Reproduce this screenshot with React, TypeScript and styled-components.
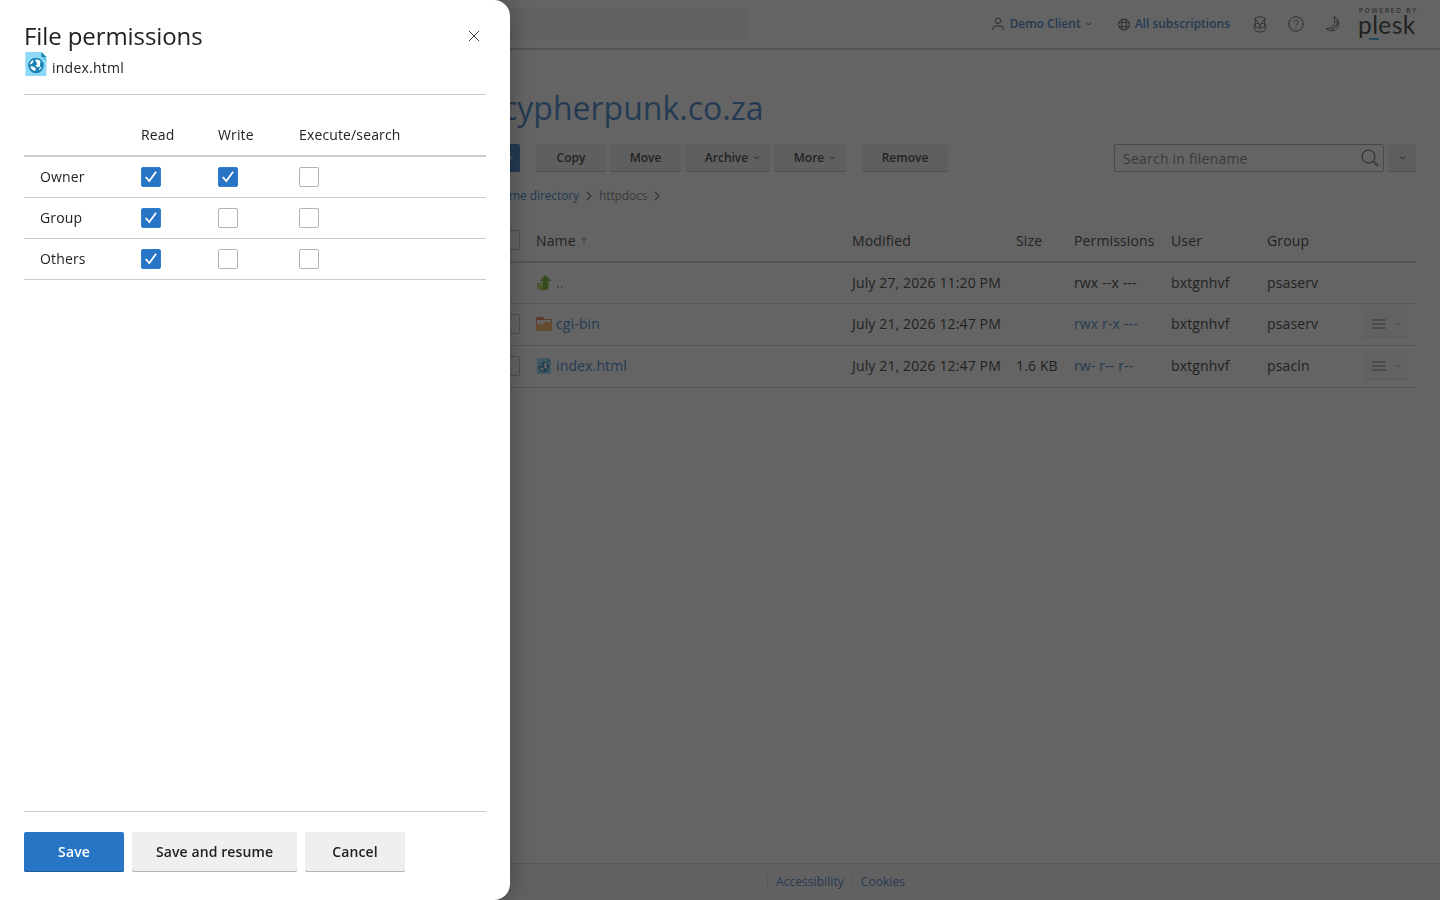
import React from "react";
import styled, { createGlobalStyle, css } from "styled-components";

const GlobalStyle = createGlobalStyle`
  * { box-sizing: border-box; }
  html, body, #root { height: 100%; }
  body {
    margin: 0;
    overflow: hidden;
    background: #fff;
    color: #222;
    font: 14px/20px "Open Sans", "Noto Sans", sans-serif;
    letter-spacing: 0.14px;
  }
  button { font-family: inherit; color: inherit; margin: 0; padding: 0; border: 0; }
  svg { display: block; flex: none; }
`;

/* Page behind the drawer */

const Page = styled.div`
  height: 900px;
  display: flex;
  flex-direction: column;
`;

const Header = styled.header`
  height: 48px;
  flex: none;
  display: flex;
  align-items: center;
  padding: 0 24px 0 248px;
  box-shadow: 0 1px 2px rgba(0, 0, 0, 0.4);
`;

const GlobalSearch = styled.div`
  width: 500px;
  height: 32px;
  border-radius: 2px;
  background: #f5f5f5;
`;

const HeaderNav = styled.nav`
  margin-left: auto;
  display: flex;
  align-items: center;
  height: 48px;
`;

const HeaderLink = styled.a<{ $gap: number }>`
  display: flex;
  align-items: center;
  gap: 5px;
  margin-right: ${(p) => p.$gap}px;
  color: #2875c5;
  font-size: 12px;
  font-weight: 600;
  letter-spacing: 0;
  white-space: nowrap;
`;

const HeaderIcon = styled.span<{ $gap: number }>`
  margin-right: ${(p) => p.$gap}px;
`;

const Brand = styled.div`
  width: 58px;
  height: 48px;
  padding: 8px 0 0 1px;
  color: #222;
`;

const BrandCaption = styled.div`
  font: 6.3px/6px Inter, sans-serif;
  letter-spacing: 1.78px;
  white-space: nowrap;
`;

const BrandName = styled.div`
  margin: -1px 0 0 -1px;
  font: 400 24.5px/24px Lato, sans-serif;
  letter-spacing: 0.4px;
`;

const BrandBar = styled.div`
  width: 10px;
  height: 2px;
  margin: 1px 0 0 10px;
  background: #28aade;
`;

const Main = styled.main`
  flex: 1;
  padding: 40px 24px 0 480px;
`;

const Title = styled.h1`
  margin: 0 0 16px 22px;
  color: #2875c5;
  font-size: 32px;
  line-height: 40px;
  font-weight: 400;
  letter-spacing: 0;
`;

const Toolbar = styled.div`
  display: flex;
  height: 28px;
`;

const ToolButton = styled.button<{ $width: number; $gap?: number; $primary?: boolean; $menu?: boolean }>`
  width: ${(p) => p.$width}px;
  height: 28px;
  margin-right: ${(p) => p.$gap ?? 4}px;
  padding: 0 0 1px ${(p) => (p.$menu ? 9 : 0)}px;
  display: flex;
  align-items: center;
  justify-content: center;
  gap: 6px;
  border-radius: 2px;
  background: ${(p) => (p.$primary ? "#2875c5" : "#efefef")};
  box-shadow: inset 0 -1px 0 ${(p) => (p.$primary ? "#1f5c9c" : "#b5b5b5")};
  color: ${(p) => (p.$primary ? "#fff" : "#222")};
  font-size: 12px;
  font-weight: 600;
`;

const AddButton = styled(ToolButton)`
  justify-content: flex-end;
  padding-right: 7px;
`;

const SearchField = styled.div`
  width: 270px;
  height: 28px;
  margin: 0 4px 0 auto;
  padding: 0 4px 0 8px;
  display: flex;
  align-items: center;
  justify-content: space-between;
  border: 1px solid #a3a3a3;
  border-radius: 2px;
  color: #737373;
  letter-spacing: 0.23px;
  span { padding-top: 1px; }
`;

const Breadcrumbs = styled.div`
  height: 20px;
  margin: 14px 0;
  padding-left: 10px;
  display: flex;
  align-items: center;
  font-size: 12px;
  letter-spacing: -0.1px;
  color: #737373;
`;

const Crumb = styled.span<{ $link?: boolean }>`
  color: ${(p) => (p.$link ? "#2875c5" : "#737373")};
  margin-right: 7px;
  white-space: nowrap;
  &:first-child { width: 89px; text-align: right; }
  & + svg { margin-right: 7px; }
`;

const FileRow = styled.div<{ $head?: boolean; $height?: number }>`
  display: grid;
  grid-template-columns: 56px 316px 164px 58px 97px 96px 96px 53px;
  align-items: center;
  height: ${(p) => p.$height ?? 42}px;
  padding-bottom: ${(p) => (p.$height === 41 ? 0 : 1)}px;
  border-bottom: ${(p) => (p.$head ? 2 : 1)}px solid #ccc;
  white-space: nowrap;
  line-height: ${(p) => (p.$head ? 22 : 20)}px;
  & > span + span,
  & > div + span { padding-top: ${(p) => (p.$head ? 1 : 0)}px; }
`;

const NameCell = styled.div<{ $drop?: number }>`
  display: flex;
  align-items: center;
  gap: 4px;
  padding-top: ${(p) => p.$drop ?? 0}px;
`;

const Link = styled.a`
  color: #2875c5;
`;

const RowMenu = styled.button`
  width: 45px;
  height: 28px;
  display: flex;
  align-items: center;
  justify-content: center;
  gap: 9px;
  border-radius: 2px;
  background: #efefef;
  box-shadow: inset 0 -1px 0 #b5b5b5;
  opacity: 0.45;
`;

const Footer = styled.footer`
  height: 37px;
  padding-left: 767px;
  display: flex;
  align-items: center;
  border-top: 1px solid #ccc;
  background: #f5f5f5;
  font-size: 12px;
  letter-spacing: 0.06px;
`;

const FooterLink = styled.a`
  height: 16px;
  line-height: 16px;
  padding: 0 8px;
  border-left: 1px solid #d9d9d9;
  color: #2875c5;
`;

const Overlay = styled.div`
  position: fixed;
  inset: 0;
  background: rgba(34, 34, 34, 0.7);
`;

/* Drawer */

const Drawer = styled.aside`
  position: fixed;
  top: 0;
  left: 0;
  width: 510px;
  height: 900px;
  padding: 0 24px;
  display: flex;
  flex-direction: column;
  background: #fff;
  border-radius: 0 16px 16px 0;
  box-shadow: 0 0 24px rgba(0, 0, 0, 0.3);
`;

const DrawerHeader = styled.div`
  height: 95px;
  padding-top: 20px;
  display: flex;
  justify-content: space-between;
  border-bottom: 1px solid #ccc;
`;

const DrawerTitle = styled.h2`
  margin: 0;
  font-size: 24px;
  line-height: 32px;
  font-weight: 400;
  letter-spacing: -0.09px;
`;

const DrawerFile = styled.div`
  display: flex;
  gap: 4px;
  letter-spacing: 0.23px;
  span { padding-top: 6px; }
`;

const CloseButton = styled.button`
  width: 24px;
  height: 32px;
  display: grid;
  place-items: center;
  background: none;
`;

const Permissions = styled.div`
  flex: 1;
  padding-top: 20px;
`;

const PermissionRow = styled.div<{ $head?: boolean }>`
  display: grid;
  grid-template-columns: 101px 77px 81px 1fr;
  align-items: center;
  height: ${(p) => (p.$head ? 42 : 41)}px;
  padding-left: 16px;
  border-bottom: ${(p) => (p.$head ? 2 : 1)}px solid #ccc;
`;

const Box = styled.span<{ $checked?: boolean }>`
  width: 20px;
  height: 20px;
  display: grid;
  place-items: center;
  border: 1px solid #b3b3b3;
  border-radius: 2px;
  background: #fff;
  ${(p) =>
    p.$checked &&
    css`
      border-color: #2f7fd0;
      background: #2875c5;
    `}
`;

const HeadBox = styled(Box)`
  margin-left: 20px;
`;

const DrawerFooter = styled.div`
  height: 89px;
  padding-top: 20px;
  display: flex;
  gap: 8px;
  border-top: 1px solid #ccc;
`;

const ActionButton = styled.button<{ $width: number; $primary?: boolean }>`
  width: ${(p) => p.$width}px;
  height: 40px;
  padding-bottom: 2px;
  border-radius: 2px;
  background: ${(p) => (p.$primary ? "#2875c5" : "#efefef")};
  box-shadow: inset 0 -1px 0 ${(p) => (p.$primary ? "#1f5c9c" : "#b5b5b5")};
  color: ${(p) => (p.$primary ? "#fff" : "#222")};
  font-size: 14px;
  font-weight: 600;
  letter-spacing: 0.1px;
`;

/* Icons */

const Chevron = () => (
  <svg width="5" height="4" viewBox="0 0 5 4" fill="none" stroke="#222" strokeWidth="1" overflow="visible">
    <path d="M.1.6 2.500 3 4.900.6" />
  </svg>
);

const CrumbArrow = () => (
  <svg width="6" height="10" viewBox="0 0 6 10" fill="none" stroke="#555" strokeWidth="1.1">
    <path d="M1 1 5 5 1 9" />
  </svg>
);

const HtmlIcon = ({ size }: { size: number }) => (
  <svg width={size} height={size} viewBox="-0.4 0 24 24">
    <path fill="#8ed8f8" d="M2 0h15l5 5v18a1 1 0 0 1-1 1H2a1 1 0 0 1-1-1V1a1 1 0 0 1 1-1Z" />
    <path fill="#6dc3e6" d="M17 5h5v5Z" />
    <path fill="#1c84b5" d="M17 0v5h5Z" />
    <circle cx="11.600" cy="13.500" r="7.800" fill="#1c84b5" />
    <path fill="#fff" d="M5.600 12.200C6 10 7 8.700 8.600 7.900L9 9.600 7.400 12ZM10.500 8c2-1 4.500-.2 5.700 1.700l-.7 2.400.3 2.400-2.300.8-2.700-1.300 1.900-1.600-.5-2.200ZM5.900 14.200l3 .3 2.500 2-.6 2.500C8.200 18.800 6.400 17 5.900 14.200ZM17.200 14.600c-.2 1.700-1.200 3-2.600 3.700l.2-1.900Z" />
  </svg>
);

const FolderIcon = () => (
  <svg width="16" height="16" viewBox="0 0 16 16">
    <path fill="#e8743b" d="M0 2a1 1 0 0 1 1-1h6l1 2h7a1 1 0 0 1 1 1v6H0Z" />
    <path fill="#fff" d="M1 4h14v4H1Z" />
    <path fill="#fba950" d="M0 8h7l2-2h7v8a1 1 0 0 1-1 1H1a1 1 0 0 1-1-1Z" />
  </svg>
);

const UpIcon = () => (
  <svg width="16" height="16" viewBox="0 0 16 16">
    <path fill="#a4d64f" d="M1 8h5.500v7H4.500A3.500 3.500 0 0 1 1 11.500Z" />
    <path fill="#67a80c" d="M9.500 0 15.300 6H12.500v5.500A3.500 3.500 0 0 1 9 15H4c2 0 2.700-1 2.700-3V6H3.700Z" />
  </svg>
);

const UserIcon = () => (
  <svg width="12" height="14" viewBox="0 0 12 14" fill="none" stroke="#333">
    <rect x="3.500" y="1" width="5" height="5.500" rx="2.400" />
    <path d="M1 13v-1.500A2.500 2.500 0 0 1 3.500 9h5a2.500 2.500 0 0 1 2.500 2.500V13" />
  </svg>
);

const GlobeIcon = () => (
  <svg width="12" height="13" viewBox="0.5 0 12 13" fill="none" stroke="#333">
    <circle cx="6.500" cy="6.500" r="5.500" />
    <path strokeWidth="0.9" d="M4.800 1.200Q3.300 6.500 4.800 11.800M8.200 1.200Q9.700 6.500 8.200 11.800M1.500 4.300h10M1.500 8.700h10" />
  </svg>
);

const MascotIcon = () => (
  <svg width="14" height="17" viewBox="0 0 14 17" fill="none" stroke="#444" strokeWidth="0.9">
    <path d="M.5 3.200Q7-1.800 13.500 3.200M2.400 2.400v4.200C-.6 11.500 1.500 16 7 16s7.600-4.500 4.600-9.400V2.400M2.800 3.200 5.200 6.600M11.200 3.200 8.800 6.600M6 12.800h2" />
    <circle cx="4.500" cy="9.500" r="2.300" />
    <circle cx="9.500" cy="9.500" r="2.300" />
  </svg>
);

const HelpIcon = () => (
  <svg width="16" height="16" viewBox="0 0 16 16" fill="none" stroke="#444">
    <circle cx="8" cy="8" r="7.200" />
    <path d="M6 6.300C6 3.600 10 3.600 10 6.200 10 7.800 8 7.700 8 9.500M8 11v1.200" />
  </svg>
);

const MoonIcon = () => (
  <svg width="16" height="16" viewBox="0 0 16 16" fill="none" stroke="#333" strokeWidth="0.9">
    <path d="M8.800.8A7.300 7.300 0 0 1 8 14.700Q4 15.500 1.300 12.600C7.500 13.300 11.800 7 8.800.8ZM12 4.500Q12.800 10.500 6.500 13.500" />
  </svg>
);

const SearchIcon = () => (
  <svg width="18" height="18" viewBox="0 0 18 18" fill="none" stroke="#333">
    <circle cx="7.500" cy="7.500" r="6.500" />
    <path d="m11.500 12.700 1.200-1.200 4 4q.5.600 0 1.200t-1.200 0Z" />
  </svg>
);

const Check = () => (
  <svg width="14" height="14" viewBox="0 0 14 14" fill="none" stroke="#fff" strokeWidth="1.800">
    <path d="M1.700 7 5.300 11 12.100 1.800" />
  </svg>
);

const Burger = () => (
  <svg width="14" height="10" viewBox="0 0 14 10" fill="none" stroke="#444" strokeWidth="2" strokeLinecap="round">
    <path d="M1 1h12M1 5h12M1 9h12" />
  </svg>
);

const files = [
  { name: "..", icon: <UpIcon />, date: "July 27, 2026 11:20 PM", size: "", mode: "rwx --x ---", group: "psaserv", parent: true },
  { name: "cgi-bin", icon: <FolderIcon />, date: "July 21, 2026 12:47 PM", size: "", mode: "rwx r-x ---", group: "psaserv" },
  { name: "index.html", icon: <HtmlIcon size={16} />, date: "July 21, 2026 12:47 PM", size: "1.6 KB", mode: "rw- r-- r--", group: "psacln" },
];

const permissions: [string, boolean[]][] = [
  ["Owner", [true, true, false]],
  ["Group", [true, false, false]],
  ["Others", [true, false, false]],
];

export default function App() {
  return (
    <>
      <GlobalStyle />
      <Page>
        <Header>
          <GlobalSearch />
          <HeaderNav>
            <HeaderLink $gap={27}><UserIcon /><span>Demo Client</span><Chevron /></HeaderLink>
            <HeaderLink $gap={23}><GlobeIcon /><span>All subscriptions</span></HeaderLink>
            <HeaderIcon $gap={21}><MascotIcon /></HeaderIcon>
            <HeaderIcon $gap={21}><HelpIcon /></HeaderIcon>
            <HeaderIcon $gap={17}><MoonIcon /></HeaderIcon>
            <Brand>
              <BrandCaption>POWERED BY</BrandCaption>
              <BrandName>plesk</BrandName>
              <BrandBar />
            </Brand>
          </HeaderNav>
        </Header>
        <Main>
          <Title>cypherpunk.co.za</Title>
          <Toolbar>
            <AddButton $width={40} $gap={16} $primary>+</AddButton>
            <ToolButton $width={70}>Copy</ToolButton>
            <ToolButton $width={71}>Move</ToolButton>
            <ToolButton $width={85} $menu><span>Archive</span> <Chevron /></ToolButton>
            <ToolButton $width={72} $gap={16} $menu><span>More</span> <Chevron /></ToolButton>
            <ToolButton $width={86}>Remove</ToolButton>
            <SearchField><span>Search in filename</span><SearchIcon /></SearchField>
            <ToolButton $width={28} $gap={0}><Chevron /></ToolButton>
          </Toolbar>
          <Breadcrumbs>
            <Crumb $link>Home directory</Crumb><CrumbArrow />
            <Crumb>httpdocs</Crumb><CrumbArrow />
          </Breadcrumbs>
          <FileRow $head $height={43}>
            <HeadBox />
            <NameCell $drop={1}>
              Name
              <svg width="8" height="10" viewBox="0 0 8 10" fill="none" stroke="#888"><path d="M4 9.500V1M1 4l3-3 3 3" /></svg>
            </NameCell>
            <span>Modified</span><span>Size</span><span>Permissions</span><span>User</span><span>Group</span><span />
          </FileRow>
          {files.map((f) => (
            <FileRow key={f.name} $height={f.parent ? 41 : 42}>
              {f.parent ? <span /> : <HeadBox />}
              <NameCell>{f.icon}<Link>{f.name}</Link></NameCell>
              <span>{f.date}</span>
              <span>{f.size}</span>
              {f.parent ? <span>{f.mode}</span> : <Link>{f.mode}</Link>}
              <span>bxtgnhvf</span>
              <span>{f.group}</span>
              {!f.parent && <RowMenu><Burger /><Chevron /></RowMenu>}
            </FileRow>
          ))}
        </Main>
        <Footer>
          <FooterLink>Accessibility</FooterLink>
          <FooterLink>Cookies</FooterLink>
        </Footer>
      </Page>
      <Overlay />
      <Drawer>
        <DrawerHeader>
          <div>
            <DrawerTitle>File permissions</DrawerTitle>
            <DrawerFile><HtmlIcon size={24} /><span>index.html</span></DrawerFile>
          </div>
          <CloseButton aria-label="Close">
            <svg width="12" height="12" viewBox="0 0 12 12" fill="none" stroke="#444"><path d="m1 1 10 10M11 1 1 11" /></svg>
          </CloseButton>
        </DrawerHeader>
        <Permissions>
          <PermissionRow $head>
            <span /><span>Read</span><span>Write</span><span>Execute/search</span>
          </PermissionRow>
          {permissions.map(([label, values]) => (
            <PermissionRow key={label}>
              <span>{label}</span>
              {values.map((on, i) => <Box key={i} $checked={on}>{on && <Check />}</Box>)}
            </PermissionRow>
          ))}
        </Permissions>
        <DrawerFooter>
          <ActionButton $width={100} $primary>Save</ActionButton>
          <ActionButton $width={165}>Save and resume</ActionButton>
          <ActionButton $width={100}>Cancel</ActionButton>
        </DrawerFooter>
      </Drawer>
    </>
  );
}
